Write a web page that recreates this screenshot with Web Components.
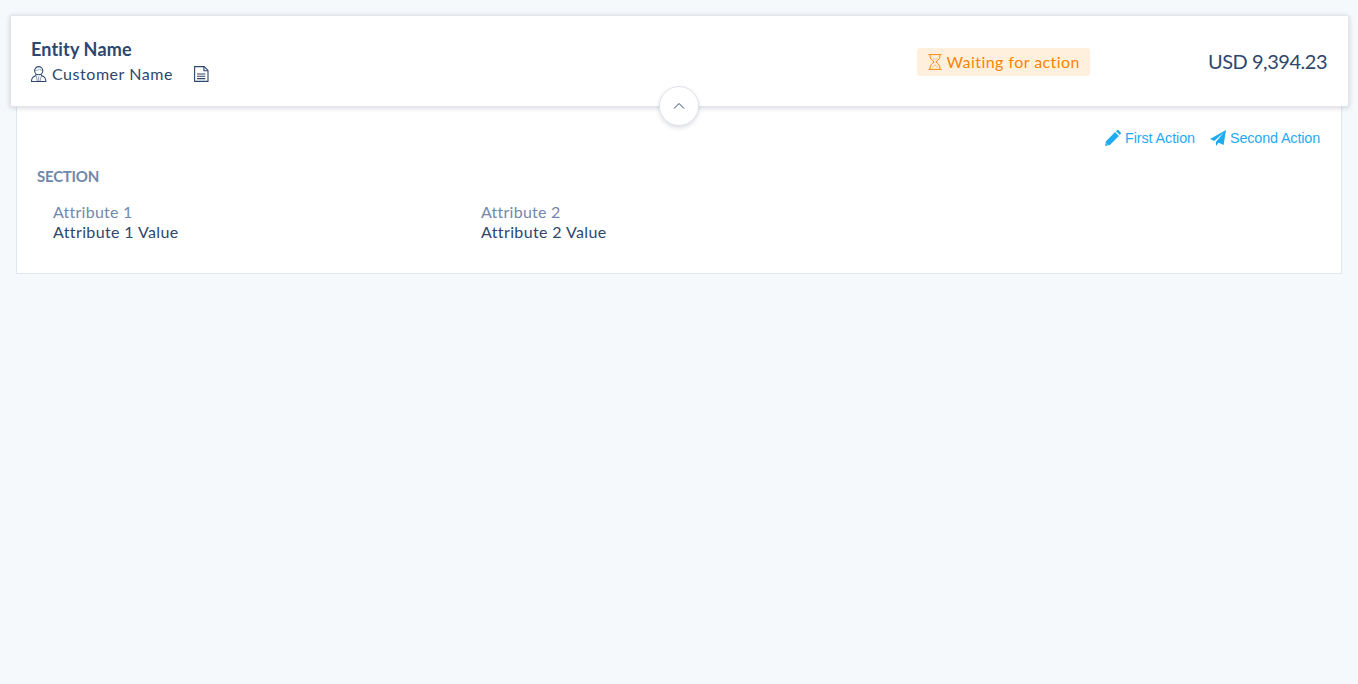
<!DOCTYPE html>
<html lang="en"><head><meta charset="utf-8"><title>Entity</title>
<style>
html,body{margin:0;height:100%}
body{background:#f5f9fc;color:#2d476e;font:16px/20px Lato,"Open Sans",sans-serif;overflow:hidden}
</style></head><body>
<entity-page></entity-page>
<script>
const define=(name,html,ready)=>customElements.define(name,class extends HTMLElement{
  constructor(){super();this.attachShadow({mode:'open'}).innerHTML=html}
  connectedCallback(){if(ready)ready.call(this)}
});

// Text run tracked to a given advance width.
define('fit-text','<style>:host{display:inline-block;white-space:nowrap}span{display:inline-block}</style><span><slot></slot></span>',function(){
  const w=+this.getAttribute('w'),s=this.shadowRoot.querySelector('span');
  const n=this.textContent.length;
  s.style.letterSpacing=((w-s.getBoundingClientRect().width)/n)+'px';
  this.style.width=w+'px';
});

const icons={
 user:['0 0 16 16','<g fill="none" stroke="currentColor" stroke-width="1.05"><circle cx="7.7" cy="4.7" r="4.1"/><path d="M3.9 4.3c2.2.3 3.8-.3 4.6-1.5.7 1 1.6 1.5 2.9 1.5" stroke-width=".5"/><path d="M5.3 8.3 4.6 9.7C1.9 10.4.5 12 .5 15.4h14.4c0-3.4-1.4-5-4.1-5.7l-.7-1.4"/><path d="M7.7 10.5v4.8M5 9.8l1.4 5.4M10.4 9.8 9 15.2" stroke-width=".55"/></g>'],
 doc:['0 0 16 16','<g fill="none" stroke="currentColor" stroke-width="1.1"><path d="M.6.6h9.6l3.8 3.8v11H.6z"/><path d="M9.9.8v3.9h4"/><path d="M3 8h8.3M3 10.3h8.3M3 12.6h8.3"/></g>'],
 hourglass:['0 0 14 16','<g fill="none" stroke="currentColor" stroke-width=".95"><path d="M.4.6h13.2M.4 15.4h13.2M2 .8c0 3.8 1.2 5.1 4.2 7.2C3.2 10.1 2 11.4 2 15.2M12 .8c0 3.8-1.2 5.1-4.2 7.2 3 2.1 4.2 3.4 4.2 7.2"/><path d="M4.4 5h5.2M4 13.5l3-2.6 3 2.6" stroke-width=".5"/></g>'],
 chevron:['0 0 12 8','<path d="M1 6.5 6 1.5l5 5" fill="none" stroke="currentColor" stroke-width="1"/>'],
 pencil:['0 0 16 16','<path fill="currentColor" d="M10.1 2.1 13.9 5.9 4.8 15 0 16l1-4.8zM11 1.2l.7-.7c.6-.6 1.5-.6 2.1 0L15.5 2.2c.6.6.6 1.5 0 2.1l-.7.7z"/><path d="M1.2 13.4 2.6 14.8" stroke="#fff" stroke-width=".6"/>'],
 plane:['0 0 16 16','<path fill="currentColor" d="M16 0 0 9l4.3 2L13.8 2.6 6 11.8V16l2.7-3.2 4.9 2.1z"/>']
};
customElements.define('ui-icon',class extends HTMLElement{
  constructor(){super();this.attachShadow({mode:'open'})}
  connectedCallback(){
    const [box,body]=icons[this.getAttribute('name')],[, ,w,h]=box.split(' ');
    this.shadowRoot.innerHTML=`<style>:host{display:block;flex:none;width:${w}px;height:${h}px}svg{display:block}</style><svg width="${w}" height="${h}" viewBox="${box}">${body}</svg>`;
  }
});

define('status-badge',`<style>:host{display:flex;align-items:center;box-sizing:border-box;width:173px;height:28px;padding-left:11px;gap:4.5px;border-radius:3px;background:#fff0de;color:#fa8405}</style>
<ui-icon name="hourglass"></ui-icon><slot></slot>`);

define('toggle-button',`<style>:host{display:flex;align-items:center;justify-content:center;box-sizing:border-box;width:40px;height:40px;border:1px solid #e0e3eb;border-radius:50%;background:#fff;box-shadow:0 2px 4px rgba(40,50,80,.15)}</style><ui-icon name="chevron"></ui-icon>`);

define('entity-header',`<style>
:host{display:flex;align-items:center;position:relative;box-sizing:border-box;height:92px;margin:0 9.5px;padding:0 20.5px;border:1px solid #e4e6ec;border-radius:2px;background:#fff;box-shadow:0 1px 5px rgba(40,50,80,.2)}
.id{display:flex;flex-direction:column;gap:5px;flex:1;padding-top:1px}
.name{font-size:18px;font-weight:700;line-height:20px}
.row{display:flex;align-items:center;height:20px}
.customer{margin:0 21px 0 5px}
status-badge{margin:2px 118px 0 0}
.amount{font-size:20px;line-height:24px;margin-top:-1px}
toggle-button{position:absolute;left:50%;top:70px;margin-left:-20px}
</style>
<div class="id"><fit-text class="name" w="101">Entity Name</fit-text>
<div class="row"><ui-icon name="user"></ui-icon><fit-text class="customer" w="121">Customer Name</fit-text><ui-icon name="doc"></ui-icon></div></div>
<status-badge><fit-text w="134">Waiting for action</fit-text></status-badge>
<fit-text class="amount" w="119">USD 9,394.23</fit-text>
<toggle-button></toggle-button>`);

define('action-link',`<style>:host{display:flex;align-items:center;gap:4px;color:#1fabf2;font:14.4px/18px "Liberation Sans",Arial,sans-serif}</style><slot name="icon"></slot><slot></slot>`);

define('attribute-item',`<style>:host{display:block;width:428px}.label{color:#7488ab}div{height:20px}</style><div class="label"><slot name="label"></slot></div><div><slot></slot></div>`);

define('entity-details',`<style>
:host{display:block;box-sizing:border-box;height:167px;margin:0 16px;padding:0 20px;border:1px solid #e0e7ee;border-top:0;background:#fff}
.actions{display:flex;justify-content:flex-end;gap:15px;padding:22px 1px 0 0}
h2{margin:19px 0 0;font-size:15px;line-height:20px;font-weight:700;color:#7188ac;height:20px}
.attrs{display:flex;padding:16px 0 0 16px}
</style>
<div class="actions"><action-link><ui-icon slot="icon" name="pencil"></ui-icon><fit-text w="70">First Action</fit-text></action-link><action-link><ui-icon slot="icon" name="plane"></ui-icon><fit-text w="90">Second Action</fit-text></action-link></div>
<h2><fit-text w="62">SECTION</fit-text></h2>
<div class="attrs"><attribute-item><fit-text slot="label" w="79">Attribute 1</fit-text><fit-text w="125">Attribute 1 Value</fit-text></attribute-item><attribute-item><fit-text slot="label" w="79">Attribute 2</fit-text><fit-text w="125">Attribute 2 Value</fit-text></attribute-item></div>`);

define('entity-page',`<style>:host{display:block;padding-top:15px}entity-header{z-index:1}</style><entity-header></entity-header><entity-details></entity-details>`);
</script></body></html>
